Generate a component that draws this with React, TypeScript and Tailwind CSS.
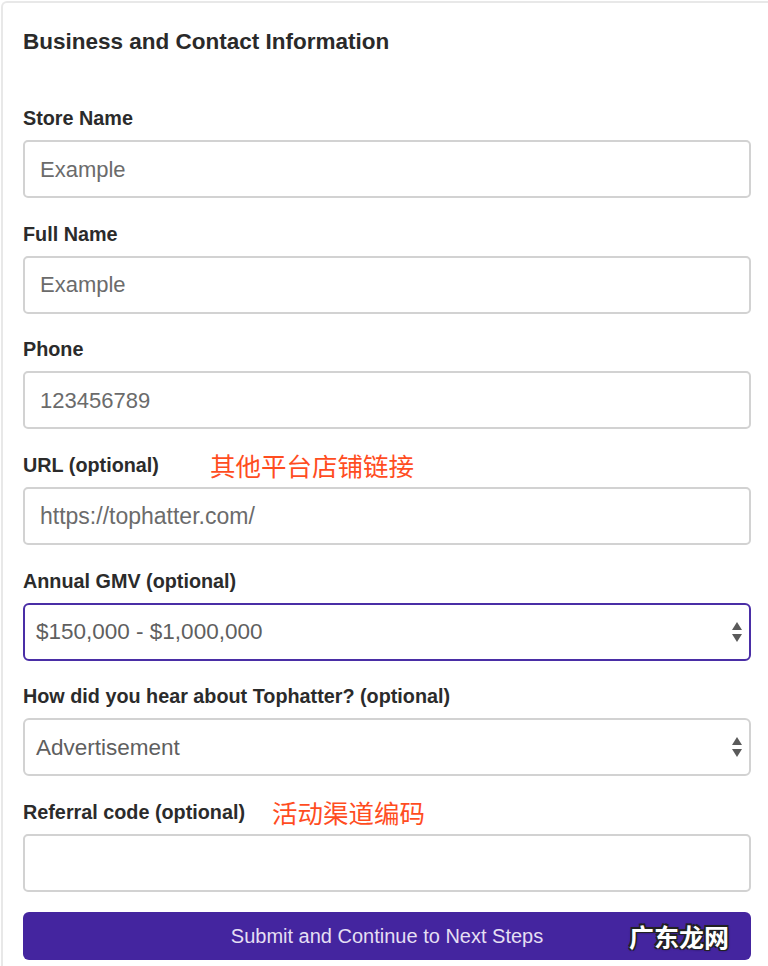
import React from 'react'

const FONT = "font-['Liberation_Sans','Helvetica_Neue',Arial,sans-serif]"
const CJK = "font-['Noto_Sans_CJK_SC','Noto_Sans',sans-serif]"

function Label({ text, note, noteGap }: { text: string; note?: string; noteGap?: string }) {
  return (
    <div className="flex h-6 items-center">
      <span className="text-[19.8px] leading-6 font-bold text-[#2b2b2b]">{text}</span>
      {note && (
        <span className={`${CJK} ${noteGap} text-[25.5px] leading-6 text-[#ff4d1f]`}>{note}</span>
      )}
    </div>
  )
}

function TextBox({ value, big }: { value: string; big?: boolean }) {
  return (
    <div
      className={
        big
          ? 'mt-[10px] flex h-[58px] items-center rounded-[5px] border-2 border-[#d2d2d2] bg-white px-[15px] text-[23px] text-[#6b6b6b]'
          : 'mt-[10px] flex h-[58px] items-center rounded-[5px] border-2 border-[#d2d2d2] bg-white px-[15px] text-[22px] text-[#6b6b6b]'
      }
    >
      {value}
    </div>
  )
}

function SelectBox({ value, focused }: { value: string; focused?: boolean }) {
  return (
    <div
      className={
        focused
          ? 'mt-[10px] flex h-[58px] items-center justify-between rounded-[6px] border-2 border-[#4a2ea6] bg-white pr-[6px] pl-[11px] text-[22.5px] text-[#5f5f5f]'
          : 'mt-[10px] flex h-[58px] items-center justify-between rounded-[6px] border-2 border-[#d2d2d2] bg-white pr-[6px] pl-[11px] text-[22.5px] text-[#5f5f5f]'
      }
    >
      <span>{value}</span>
      <svg width="12" height="22" viewBox="0 0 12 22">
        <path d="M6 1 L11 9 H1 Z" fill="#5a5a5a" />
        <path d="M6 21 L11 13 H1 Z" fill="#5a5a5a" />
      </svg>
    </div>
  )
}

export default function App() {
  return (
    <div className={`${FONT} min-h-[966px] w-[768px] overflow-hidden bg-white pt-px pl-px`}>
      <div className="min-h-[965px] rounded-tl-[6px] border-t-2 border-l-2 border-[#e8e8e8] pt-[25px] pr-[17px] pl-5">
        <h2 className="text-[22.5px] leading-7 font-bold text-[#2a2a2a]">Business and Contact Information</h2>

        <div className="mt-[50px] flex flex-col gap-[23.7px]">
          <div>
            <Label text="Store Name" />
            <TextBox value="Example" />
          </div>
          <div>
            <Label text="Full Name" />
            <TextBox value="Example" />
          </div>
          <div>
            <Label text="Phone" />
            <TextBox value="123456789" />
          </div>
          <div>
            <Label text="URL (optional)" note="其他平台店铺链接" noteGap="ml-[51px]" />
            <TextBox value="https://tophatter.com/" big />
          </div>
          <div>
            <Label text="Annual GMV (optional)" />
            <SelectBox value="$150,000 - $1,000,000" focused />
          </div>
          <div>
            <Label text="How did you hear about Tophatter? (optional)" />
            <SelectBox value="Advertisement" />
          </div>
          <div>
            <Label text="Referral code (optional)" note="活动渠道编码" noteGap="ml-[27px]" />
            <TextBox value="" />
          </div>
        </div>

        <div className="relative mt-[20px] flex h-[48px] items-center justify-center rounded-[6px] bg-[#44259f] text-[20px] text-[#e4dff3]">
          Submit and Continue to Next Steps
          <span
            className={`${CJK} absolute top-1/2 right-[22px] -translate-y-1/2 text-[25px] leading-none font-bold text-white [text-shadow:-1.5px_-1.5px_0_#222,1.5px_-1.5px_0_#222,-1.5px_1.5px_0_#222,1.5px_1.5px_0_#222,0_0_3px_#000]`}
          >
            广东龙网
          </span>
        </div>
      </div>
    </div>
  )
}
